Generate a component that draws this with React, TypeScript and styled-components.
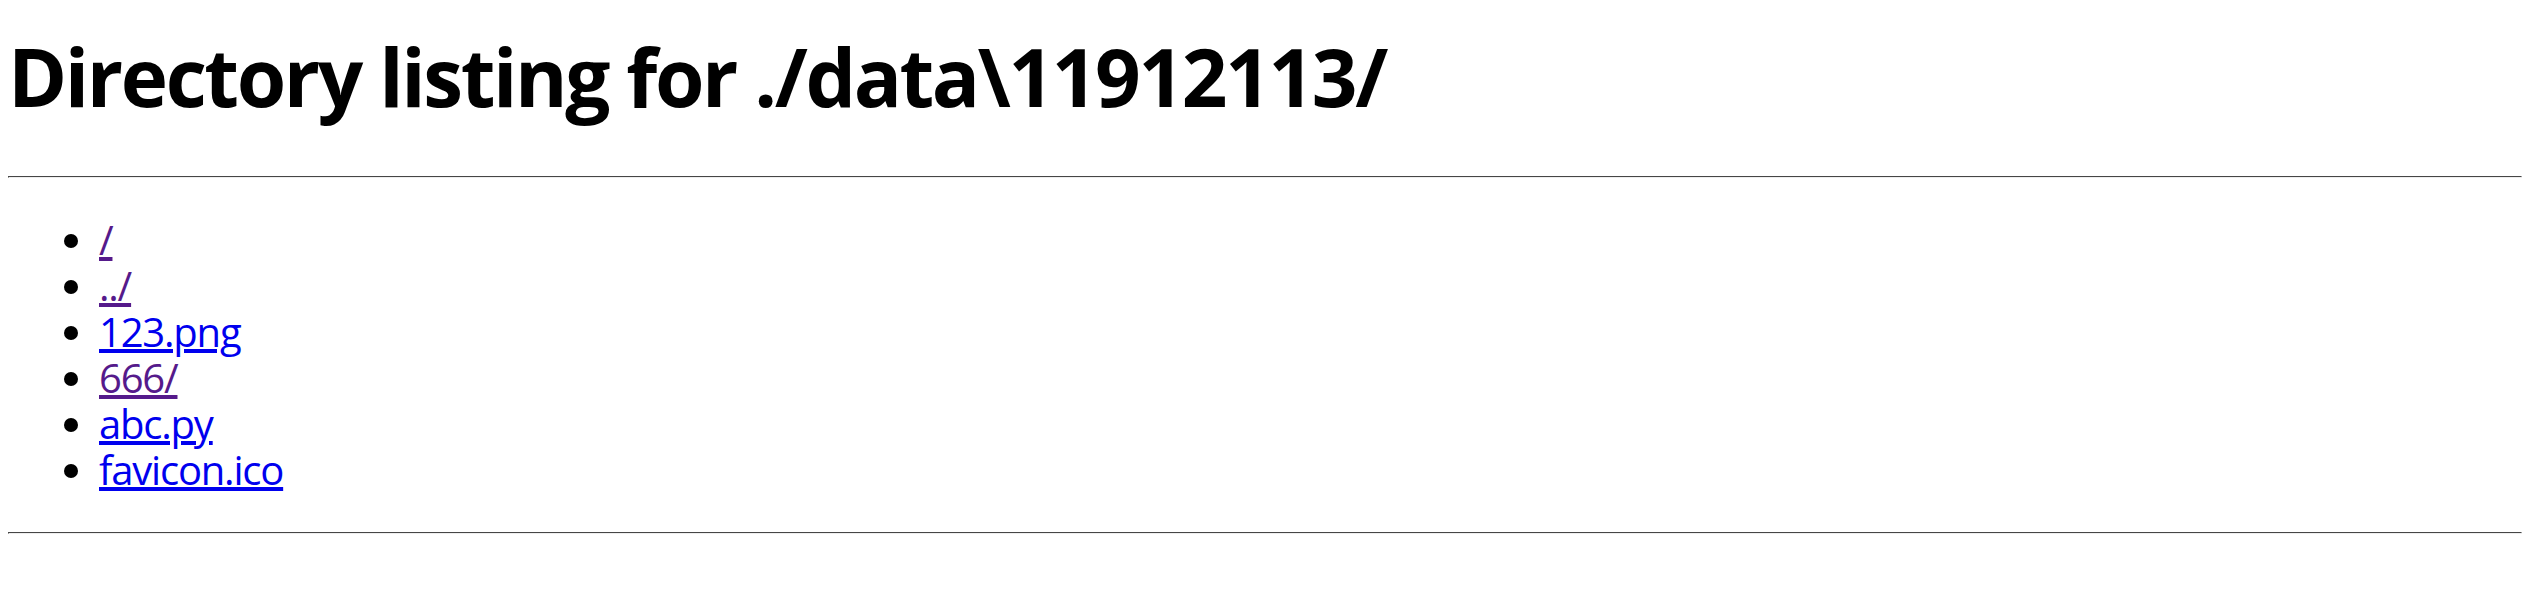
import React from "react";
import styled, { createGlobalStyle } from "styled-components";

const Global = createGlobalStyle`
  html, body { background: #ffffff; }
  body {
    margin: 8px 14px 8px 8px;
    font-family: "Open Sans", "Noto Sans CJK SC", sans-serif;
    color: #000000;
  }
`;

const Title = styled.h1`
  font-size: 80px;
  font-weight: 700;
  line-height: 100px;
  margin: 18px 0 0 0;
  letter-spacing: -2.4px;
`;

const Rule = styled.hr<{ $top: number }>`
  border: 1px inset;
  border-color: #9a9a9a #eeeeee #eeeeee #9a9a9a;
  margin: ${(p) => p.$top}px 0 0 0;
  height: 0;
`;

const List = styled.ul`
  margin: 39px 0 39px 0;
  padding-left: 91px;
  font-size: 40px;
  line-height: 46px;
  letter-spacing: -1.2px;
  list-style: disc;
`;

const Item = styled.li``;

const FileLink = styled.a<{ $visited?: boolean }>`
  color: ${(p) => (p.$visited ? "#551a8b" : "#0000ee")};
  text-decoration: underline;
`;

const entries: { name: string; visited?: boolean }[] = [
  { name: "/", visited: true },
  { name: "../", visited: true },
  { name: "123.png" },
  { name: "666/", visited: true },
  { name: "abc.py" },
  { name: "favicon.ico" },
];

export default function App() {
  return (
    <>
      <Global />
      <Title>Directory listing for ./data\11912113/</Title>
      <Rule $top={50} />
      <List>
        {entries.map((e) => (
          <Item key={e.name}>
            <FileLink href="#" $visited={e.visited}>
              {e.name}
            </FileLink>
          </Item>
        ))}
      </List>
      <Rule $top={0} />
    </>
  );
}
